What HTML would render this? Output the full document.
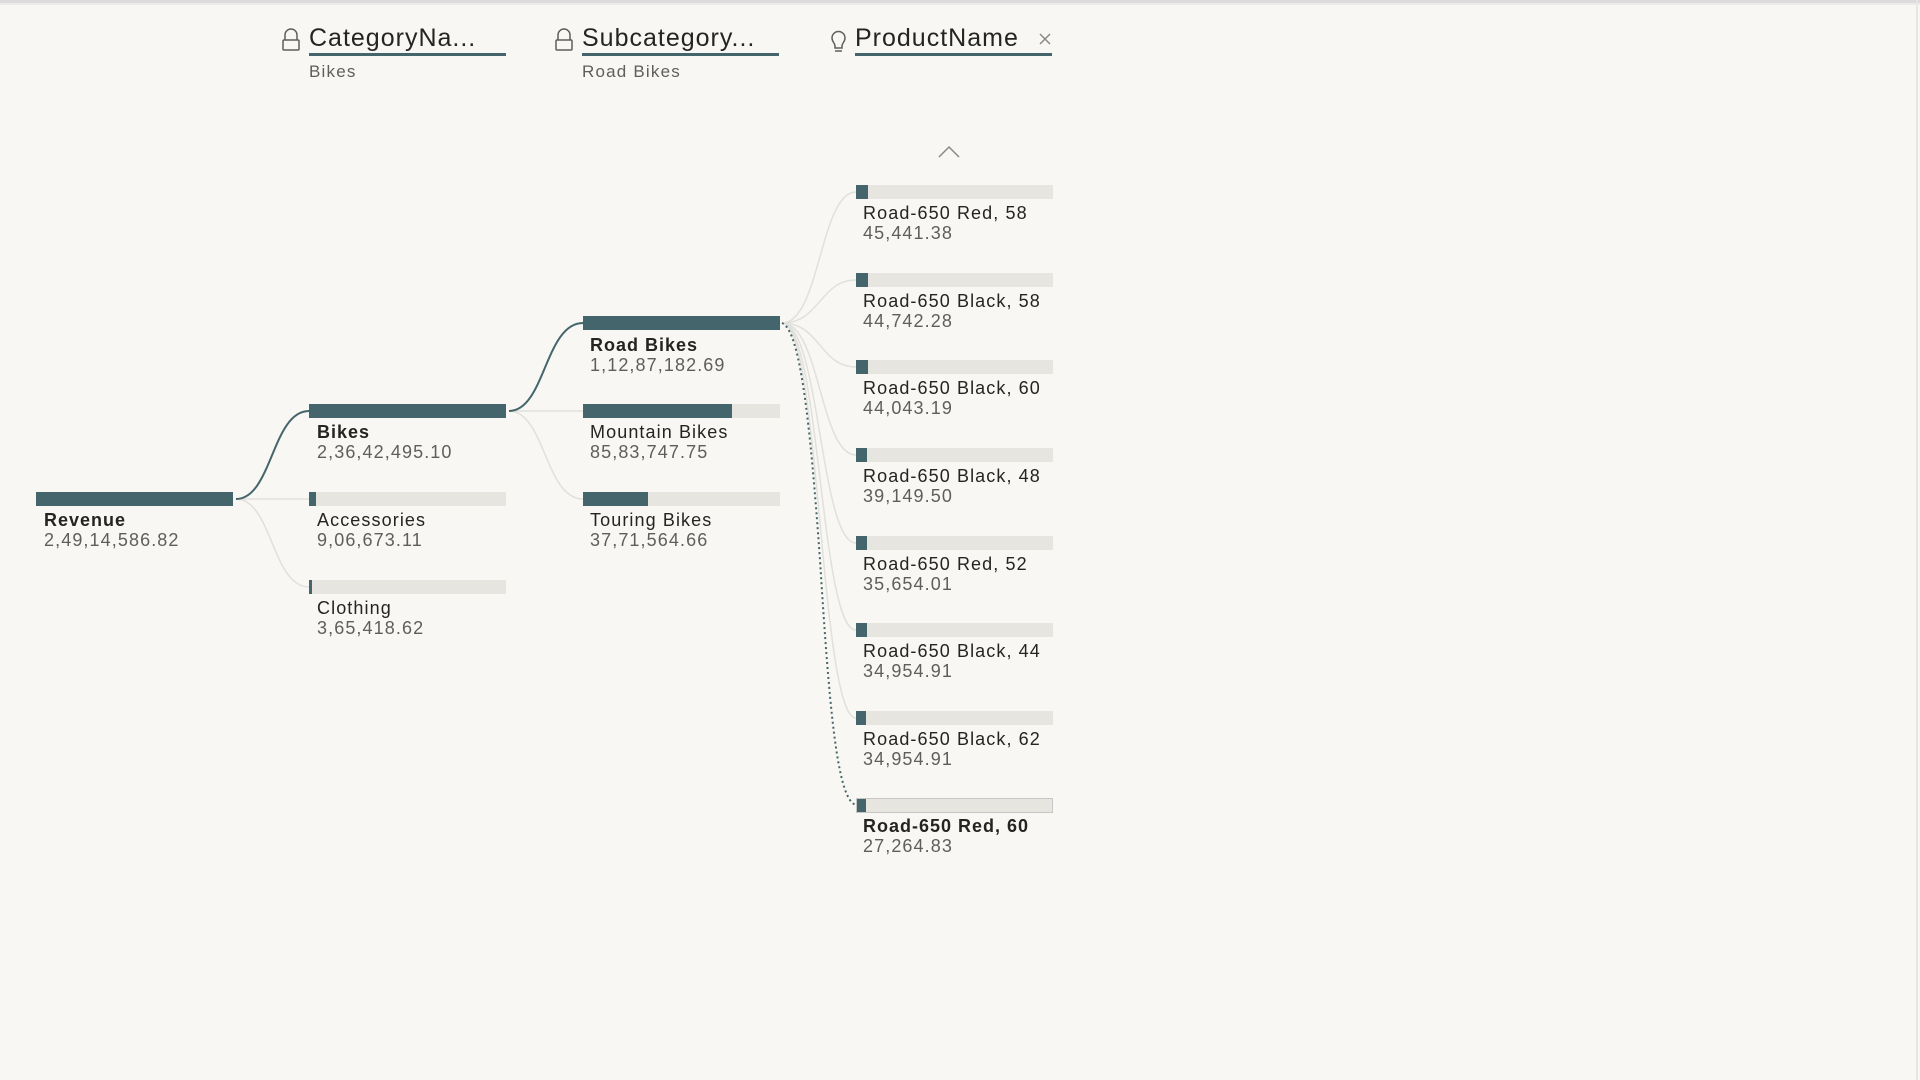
<!DOCTYPE html>
<html><head><meta charset="utf-8"><style>
html,body{margin:0;padding:0;width:1920px;height:1080px;overflow:hidden;background:#f8f7f3;}
svg{display:block}
text{font-family:"Liberation Sans","DejaVu Sans",sans-serif;}
.n{font-size:18px;fill:#252423;letter-spacing:1.1px}
.b{font-size:18px;fill:#252423;font-weight:bold;letter-spacing:1px}
.v{font-size:18px;fill:#605e5c;letter-spacing:1.1px}
.h{font-size:25px;fill:#252423;letter-spacing:1px}
.s{font-size:17px;fill:#605e5c;letter-spacing:1.2px}
</style></head><body>
<svg width="1920" height="1080" viewBox="0 0 1920 1080" xmlns="http://www.w3.org/2000/svg">
<rect x="0" y="0" width="1920" height="3" fill="#dcdcdc"/>
<rect x="0" y="3" width="1920" height="2" fill="#ecebe8"/>
<rect x="1916" y="0" width="2" height="1080" fill="#e6e6e6"/>

<!-- headers -->
<g fill="none" stroke="#605e5c" stroke-width="1.5">
<path d="M285 40 v-5 a6 6 0 0 1 12 0 v5"/><rect x="283" y="40" width="16" height="10" rx="1"/>
<path d="M558 40 v-5 a6 6 0 0 1 12 0 v5"/><rect x="556" y="40" width="16" height="10" rx="1"/>
<path d="M832 38 a6.5 6.5 0 0 1 13 0 c0 4 -3 5 -3 8 v2 h-7 v-2 c0 -3 -3 -4 -3 -8 z"/><path d="M835 51 h7"/>
<path d="M1040 34 l10 10 M1050 34 l-10 10" stroke="#8a8886"/>
</g>
<text class="h" x="309" y="46">CategoryNa...</text>
<text class="h" x="582" y="46">Subcategory...</text>
<text class="h" x="855" y="46">ProductName</text>
<rect x="309" y="53" width="197" height="3" fill="#44656c"/>
<rect x="582" y="53" width="197" height="3" fill="#44656c"/>
<rect x="855" y="53" width="197" height="3" fill="#44656c"/>
<text class="s" x="309" y="77">Bikes</text>
<text class="s" x="582" y="77">Road Bikes</text>
<path d="M939 157 l10 -10 l10 10" fill="none" stroke="#8a8886" stroke-width="1.5"/>

<!-- connectors -->
<g fill="none" stroke="#e1e0dc" stroke-width="1.5">
<path d="M236 499 C 272 499, 272 499, 309 499"/>
<path d="M236 499 C 272 499, 272 587, 309 587"/>
<path d="M509 411 C 545 411, 545 411, 583 411"/>
<path d="M509 411 C 545 411, 545 499, 583 499"/>
<path d="M782 323 C 820 323, 820 192, 856 192"/>
<path d="M782 323 C 820 323, 820 280, 856 280"/>
<path d="M782 323 C 820 323, 820 367, 856 367"/>
<path d="M782 323 C 820 323, 820 455, 856 455"/>
<path d="M782 323 C 820 323, 820 543, 856 543"/>
<path d="M782 323 C 820 323, 820 630, 856 630"/>
<path d="M782 323 C 820 323, 820 718, 856 718"/>
</g>
<g fill="none" stroke="#44656c" stroke-width="2">
<path d="M236 499 C 272 499, 272 411, 309 411"/>
<path d="M509 411 C 545 411, 545 323, 583 323"/>
<path d="M782 323 C 800 330, 810 420, 820 560 C 830 720, 838 800, 856 805" stroke-dasharray="2 3"/>
</g>

<!-- bars -->
<g>
<rect x="36" y="492" width="197" height="14" fill="#44656c"/>
<rect x="309" y="404" width="197" height="14" fill="#44656c"/>
<rect x="309" y="492" width="197" height="14" fill="#e6e5e0"/><rect x="309" y="492" width="7" height="14" fill="#44656c"/>
<rect x="309" y="580" width="197" height="14" fill="#e6e5e0"/><rect x="309" y="580" width="3" height="14" fill="#44656c"/>
<rect x="583" y="316" width="197" height="14" fill="#44656c"/>
<rect x="583" y="404" width="197" height="14" fill="#e6e5e0"/><rect x="583" y="404" width="149" height="14" fill="#44656c"/>
<rect x="583" y="492" width="197" height="14" fill="#e6e5e0"/><rect x="583" y="492" width="65" height="14" fill="#44656c"/>

<rect x="856" y="185" width="197" height="14" fill="#e6e5e0"/><rect x="856" y="185" width="12" height="14" fill="#44656c"/>
<rect x="856" y="273" width="197" height="14" fill="#e6e5e0"/><rect x="856" y="273" width="12" height="14" fill="#44656c"/>
<rect x="856" y="360" width="197" height="14" fill="#e6e5e0"/><rect x="856" y="360" width="12" height="14" fill="#44656c"/>
<rect x="856" y="448" width="197" height="14" fill="#e6e5e0"/><rect x="856" y="448" width="11" height="14" fill="#44656c"/>
<rect x="856" y="536" width="197" height="14" fill="#e6e5e0"/><rect x="856" y="536" width="11" height="14" fill="#44656c"/>
<rect x="856" y="623" width="197" height="14" fill="#e6e5e0"/><rect x="856" y="623" width="11" height="14" fill="#44656c"/>
<rect x="856" y="711" width="197" height="14" fill="#e6e5e0"/><rect x="856" y="711" width="10" height="14" fill="#44656c"/>
<rect x="856.5" y="798.5" width="196" height="14" fill="#e6e5e0" stroke="#c8c6c4"/><rect x="857" y="799" width="9" height="13" fill="#44656c"/>
</g>

<!-- labels -->
<text class="b" x="44" y="526">Revenue</text><text class="v" x="44" y="546">2,49,14,586.82</text>
<text class="b" x="317" y="438">Bikes</text><text class="v" x="317" y="458">2,36,42,495.10</text>
<text class="n" x="317" y="526">Accessories</text><text class="v" x="317" y="546">9,06,673.11</text>
<text class="n" x="317" y="614">Clothing</text><text class="v" x="317" y="634">3,65,418.62</text>
<text class="b" x="590" y="351">Road Bikes</text><text class="v" x="590" y="371">1,12,87,182.69</text>
<text class="n" x="590" y="438">Mountain Bikes</text><text class="v" x="590" y="458">85,83,747.75</text>
<text class="n" x="590" y="526">Touring Bikes</text><text class="v" x="590" y="546">37,71,564.66</text>

<text class="n" x="863" y="219">Road-650 Red, 58</text><text class="v" x="863" y="239">45,441.38</text>
<text class="n" x="863" y="307">Road-650 Black, 58</text><text class="v" x="863" y="327">44,742.28</text>
<text class="n" x="863" y="394">Road-650 Black, 60</text><text class="v" x="863" y="414">44,043.19</text>
<text class="n" x="863" y="482">Road-650 Black, 48</text><text class="v" x="863" y="502">39,149.50</text>
<text class="n" x="863" y="570">Road-650 Red, 52</text><text class="v" x="863" y="590">35,654.01</text>
<text class="n" x="863" y="657">Road-650 Black, 44</text><text class="v" x="863" y="677">34,954.91</text>
<text class="n" x="863" y="745">Road-650 Black, 62</text><text class="v" x="863" y="765">34,954.91</text>
<text class="b" x="863" y="832">Road-650 Red, 60</text><text class="v" x="863" y="852">27,264.83</text>
</svg>
</body></html>
